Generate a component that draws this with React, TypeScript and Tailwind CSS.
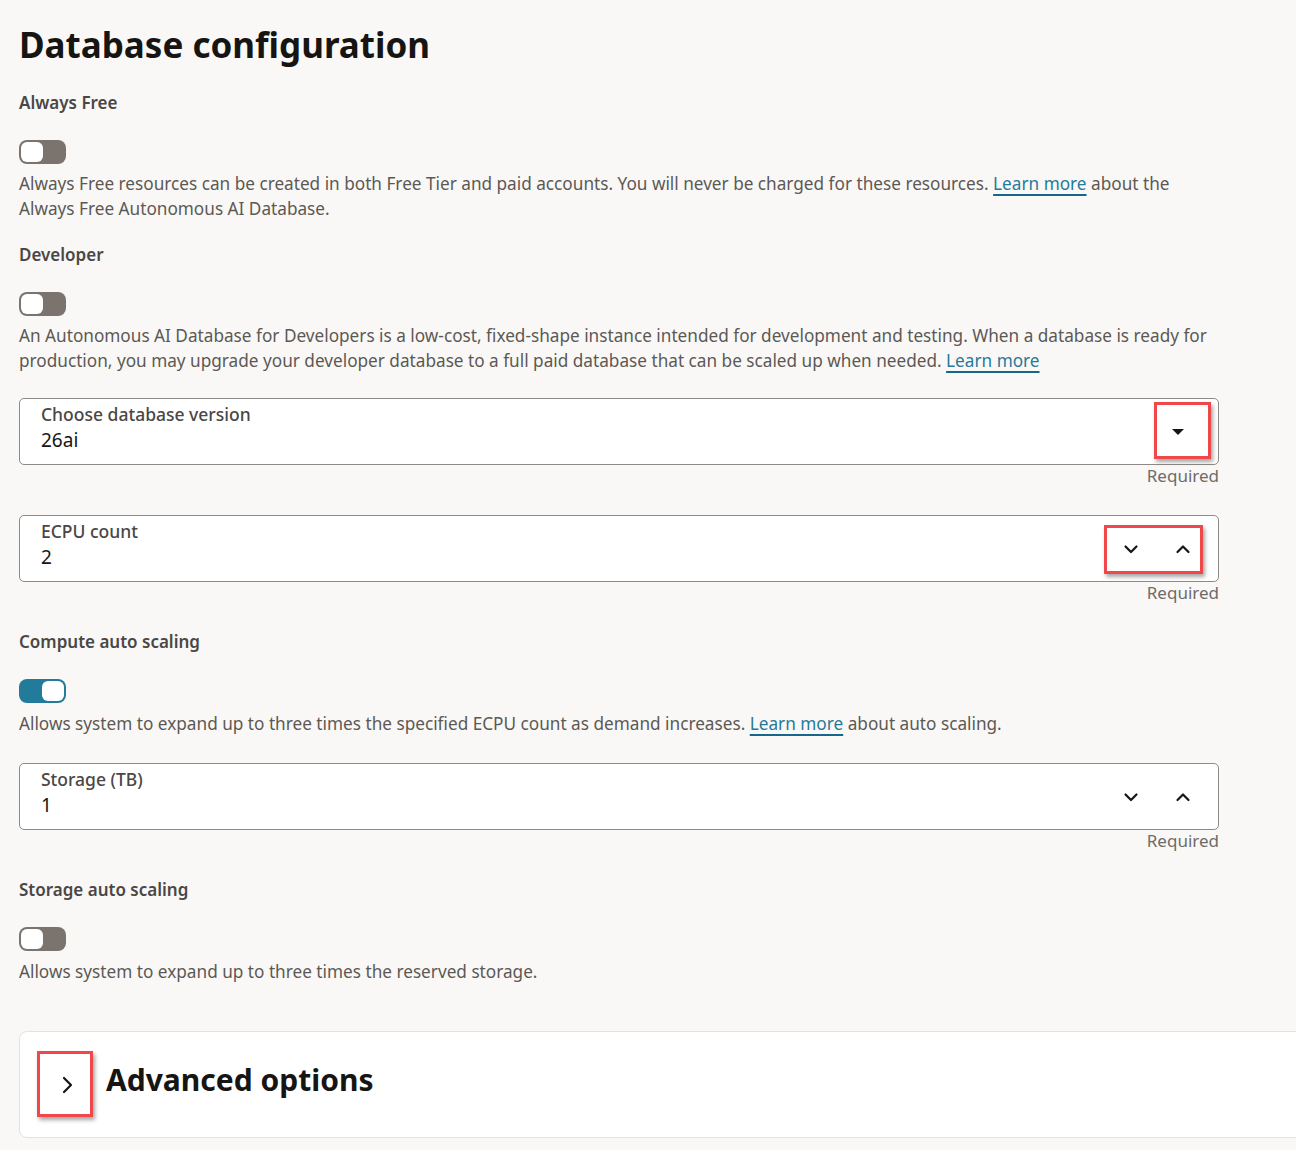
import React from "react";

const font = { fontFamily: '"Noto Sans", "Open Sans", sans-serif' };

function Toggle({ on }: { on?: boolean }) {
  return (
    <div
      className={
        "flex h-[24px] w-[47px] items-center rounded-[8px] p-[2px] " +
        (on ? "justify-end bg-[#237b9b]" : "justify-start bg-[#7b736e]")
      }
    >
      <div className="h-[20px] w-[22px] rounded-[6px] bg-white" />
    </div>
  );
}

function Link({ children }: { children: React.ReactNode }) {
  return (
    <a className="text-[#267a9a] underline decoration-[#17678a] decoration-2 underline-offset-[4px]">
      {children}
    </a>
  );
}

function Label({ children }: { children: React.ReactNode }) {
  return <div className="text-[17px] font-semibold leading-[24px] text-[#4a4745]">{children}</div>;
}

function Desc({ children }: { children: React.ReactNode }) {
  return <div className="text-[17.2px] leading-[25px] text-[#5c5955]">{children}</div>;
}

function ChevronDown() {
  return (
    <svg width="18" height="18" viewBox="0 0 18 18" fill="none">
      <path d="M3.5 6.5l5.5 5.5 5.5-5.5" stroke="#161513" strokeWidth="2.2" strokeLinecap="round" strokeLinejoin="round" />
    </svg>
  );
}
function ChevronUp() {
  return (
    <svg width="18" height="18" viewBox="0 0 18 18" fill="none">
      <path d="M3.5 12l5.5-5.5 5.5 5.5" stroke="#161513" strokeWidth="2.2" strokeLinecap="round" strokeLinejoin="round" />
    </svg>
  );
}

function RedBox({ className }: { className: string }) {
  return (
    <div
      className={
        "pointer-events-none absolute border-[3px] border-[#f2474a] shadow-[2px_3px_4px_rgba(0,0,0,0.35)] " + className
      }
    />
  );
}

function Field({
  label,
  value,
  kind,
  highlight,
}: {
  label: string;
  value: string;
  kind: "select" | "number";
  highlight?: boolean;
}) {
  return (
    <div>
      <div className="relative flex h-[67px] items-center rounded-[5px] border border-[#8f8a86] bg-white pl-[21px] pr-[14px]">
        <div className="flex flex-1 flex-col self-start pt-[4px]">
          <div className="text-[17.5px] font-medium leading-[22px] text-[#4a4745]">{label}</div>
          <div className="mt-[3px] text-[19px] leading-[24px] text-[#161513]">{value}</div>
        </div>
        {kind === "select" ? (
          <div className="mr-[14px] flex h-[24px] w-[24px] items-center justify-center">
            <svg width="14" height="8" viewBox="0 0 14 8">
              <path d="M1 1h12L7 7z" fill="#161513" />
            </svg>
          </div>
        ) : (
          <div className="mr-[12px] flex items-center gap-[34px]">
            <ChevronDown />
            <ChevronUp />
          </div>
        )}
        {highlight && kind === "select" && <RedBox className="right-[7px] top-[3px] h-[57px] w-[57px]" />}
        {highlight && kind === "number" && <RedBox className="right-[15px] top-[9px] h-[49px] w-[99px]" />}
      </div>
      <div className="text-right text-[17px] leading-[22px] text-[#6f6b68]">Required</div>
    </div>
  );
}

export default function App() {
  return (
    <div className="min-h-[1150px] w-full overflow-hidden bg-[#f9f8f6]" style={font}>
      <div className="pl-[19px] pt-[21px]">
        <div className="w-[1200px]">
          <h1 className="text-[35px] font-bold leading-[48px] text-[#161513]">Database configuration</h1>

          <div className="mt-[22px]">
            <Label>Always Free</Label>
            <div className="mt-[25px]">
              <Toggle />
            </div>
            <div className="mt-[7px]">
              <Desc>
                Always Free resources can be created in both Free Tier and paid accounts. You will never be charged
                for these resources. <Link>Learn more</Link> about the
                <br />
                Always Free Autonomous AI Database.
              </Desc>
            </div>
          </div>

          <div className="mt-[22px]">
            <Label>Developer</Label>
            <div className="mt-[25px]">
              <Toggle />
            </div>
            <div className="mt-[7px]">
              <Desc>
                An Autonomous AI Database for Developers is a low-cost, fixed-shape instance intended for development
                and testing. When a database is ready for
                <br />
                production, you may upgrade your developer database to a full paid database that can be scaled up when
                needed. <Link>Learn more</Link>
              </Desc>
            </div>
          </div>

          <div className="mt-[25px]">
            <Field label="Choose database version" value="26ai" kind="select" highlight />
          </div>
          <div className="mt-[28px]">
            <Field label="ECPU count" value="2" kind="number" highlight />
          </div>

          <div className="mt-[26px]">
            <Label>Compute auto scaling</Label>
            <div className="mt-[25px]">
              <Toggle on />
            </div>
            <div className="mt-[8px]">
              <Desc>
                Allows system to expand up to three times the specified ECPU count as demand increases.{" "}
                <Link>Learn more</Link> about auto scaling.
              </Desc>
            </div>
          </div>

          <div className="mt-[27px]">
            <Field label="Storage (TB)" value="1" kind="number" />
          </div>

          <div className="mt-[26px]">
            <Label>Storage auto scaling</Label>
            <div className="mt-[25px]">
              <Toggle />
            </div>
            <div className="mt-[8px]">
              <Desc>Allows system to expand up to three times the reserved storage.</Desc>
            </div>
          </div>
        </div>

        <div className="relative mt-[47px] flex h-[107px] w-[1300px] items-center rounded-[8px] border border-[#e4e1de] bg-white">
          <div className="ml-[38px] flex h-[24px] w-[18px] items-center justify-center">
            <svg width="14" height="20" viewBox="0 0 14 20" fill="none">
              <path d="M4 3l7 7-7 7" stroke="#161513" strokeWidth="2.2" strokeLinecap="round" strokeLinejoin="round" />
            </svg>
          </div>
          <div className="mb-[10px] ml-[30px] text-[30px] font-bold leading-[40px] text-[#161513]">Advanced options</div>
          <RedBox className="left-[17px] top-[19px] h-[66px] w-[56px]" />
        </div>
      </div>
    </div>
  );
}
